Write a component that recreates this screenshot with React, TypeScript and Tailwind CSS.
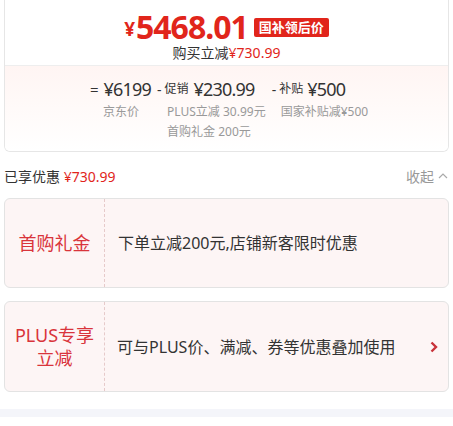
import React from "react";

const font = "font-['Noto_Sans','Noto_Sans_CJK_SC',sans-serif]";

const App = () => {
  return (
    <div className={`w-[453px] h-[426px] bg-white ${font} overflow-hidden`}>
      <div className="px-1">
        <section className="border border-t-0 border-[#e6e6e6] rounded-b-md overflow-hidden">
          <div className="h-[66px] flex flex-col items-center pt-[9px] border-b border-[#eeeeee]">
            <div className="flex items-center h-[35px]">
              <span className="text-[#e1251b] text-[19px] leading-none font-bold mr-[1px] mt-[6px]">¥</span>
              <span className="text-[#e1251b] text-[32px] font-bold leading-none tracking-[-1px]">5468.01</span>
              <span className="ml-[6px] mt-[2px] bg-[#e1251b] text-white text-[13px] font-bold leading-[19px] px-[5px] rounded-[2px]">国补领后价</span>
            </div>
            <div className="text-[14px] leading-[18px] text-[#333]">
              购买立减<span className="text-[#e1251b]">¥730.99</span>
            </div>
          </div>
          <div className="h-[85px] bg-gradient-to-b from-[#fff5f3] to-white pt-[11px] pl-[85px] flex">
            <div className="flex text-[#333]">
              <div className="flex flex-col">
                <div className="flex items-center h-[24px]">
                  <span className="text-[15px] mr-[5px]">=</span>
                  <span className="text-[18px] tracking-[-0.8px]">¥6199</span>
                </div>
                <div className="text-[12px] text-[#999] leading-[20px] mt-[1px] pl-[13px]">京东价</div>
              </div>
              <div className="flex flex-col ml-[6px]">
                <div className="flex items-center h-[24px]">
                  <span className="text-[14px] mr-[3px]">-</span>
                  <span className="text-[12px] mr-[5px]">促销</span>
                  <span className="text-[18px] tracking-[-0.8px]">¥230.99</span>
                </div>
                <div className="pl-[10px] text-[12px] text-[#999] leading-[20px] mt-[1px]">
                  <div>PLUS立减 30.99元</div>
                  <div>首购礼金 200元</div>
                </div>
              </div>
              <div className="flex flex-col ml-[6px]">
                <div className="flex items-center h-[24px]">
                  <span className="text-[14px] mr-[3px]">-</span>
                  <span className="text-[12px] mr-[4px]">补贴</span>
                  <span className="text-[18px] tracking-[-0.8px]">¥500</span>
                </div>
                <div className="pl-[9px] text-[12px] text-[#999] leading-[20px] mt-[1px]">国家补贴减¥500</div>
              </div>
            </div>
          </div>
        </section>

        <div className="flex items-center justify-between h-[46px] pt-[2px]">
          <div className="text-[14px] text-[#333]">
            已享优惠 <span className="text-[#e1251b]">¥730.99</span>
          </div>
          <div className="flex items-center text-[14px] text-[#999]">
            收起
            <svg width="12" height="12" viewBox="0 0 12 12" className="ml-[3px]">
              <path d="M2 8 L6 4 L10 8" fill="none" stroke="#aaa" strokeWidth="1.2" />
            </svg>
          </div>
        </div>

        <div className="flex flex-col gap-[13px]">
          <div className="h-[90px] flex border border-[#e3e3e3] rounded-md bg-[#fdf5f5]">
            <div className="w-[100px] flex items-center justify-center border-r border-dashed border-[#e6caca] text-[18px] text-[#d9343b]">
              首购礼金
            </div>
            <div className="flex-1 flex items-center pl-[13px] text-[16px] text-[#333]">
              下单立减200元,店铺新客限时优惠
            </div>
          </div>
          <div className="h-[91px] flex border border-[#e3e3e3] rounded-md bg-[#fdf5f5]">
            <div className="w-[100px] flex items-center justify-center text-center border-r border-dashed border-[#e6caca] text-[18px] leading-[23px] text-[#d9343b]">
              PLUS专享
              <br />
              立减
            </div>
            <div className="flex-1 flex items-center justify-between pl-[12px] pr-[8px] text-[16px] text-[#333]">
              可与PLUS价、满减、券等优惠叠加使用
              <svg width="12" height="14" viewBox="0 0 12 14">
                <path d="M3.5 2.5 L8 7 L3.5 11.5" fill="none" stroke="#c8323a" strokeWidth="2.4" />
              </svg>
            </div>
          </div>
        </div>
      </div>
      <div className="mt-[17px] h-[8px] bg-[#f4f5fa]" />
    </div>
  );
};

export default App;
